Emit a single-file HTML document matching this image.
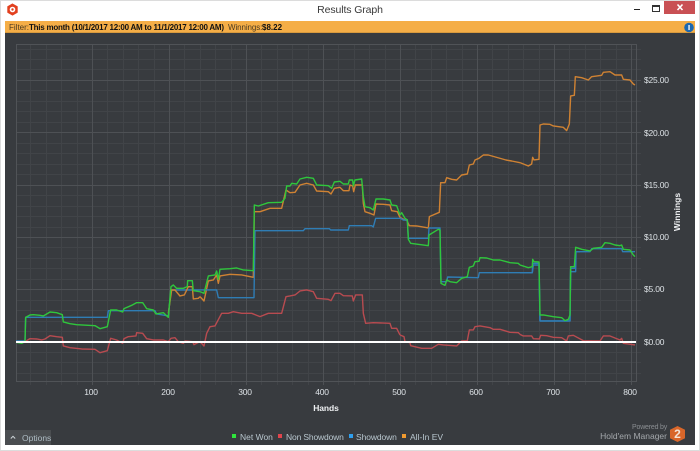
<!DOCTYPE html>
<html><head><meta charset="utf-8"><style>
html,body{margin:0;padding:0}
body{width:700px;height:451px;position:relative;overflow:hidden;background:#fff;font-family:"Liberation Sans",sans-serif}
.a{position:absolute;white-space:nowrap}
.l{font-size:8.500px;letter-spacing:-.2px;color:#dde2e6;line-height:12px}
.x{font-size:8.500px;letter-spacing:-.2px;color:#dde2e6;line-height:12px;width:40px;text-align:center;top:386px}
.k{font-size:8.500px;color:#b8c6ce;line-height:12px;top:431px}
.s{width:4px;height:4px;top:434px}
polyline{fill:none;stroke-width:1.4;vector-effect:non-scaling-stroke;stroke-linejoin:round}
.o{stroke:#cf8233}.b{stroke:#2f7db5}.r{stroke:#b84b50}.g{stroke:#2fc63c}
</style></head><body>
<div class="a" style="left:0;top:0;width:700px;height:1px;background:#dcdcdc"></div>
<div class="a" style="left:0;top:450px;width:700px;height:1px;background:#dcdcdc"></div>
<div class="a" style="left:0;top:0;width:1px;height:451px;background:#dcdcdc"></div>
<div class="a" style="left:699px;top:0;width:1px;height:451px;background:#dcdcdc"></div>
<svg class="a" style="left:6px;top:3px" width="13" height="14" viewBox="0 0 13 14"><path d="M6.500 1 11.200 3.700 11.200 9.300 6.500 12 1.800 9.300 1.800 3.700Z" fill="#e2401f" stroke="#e2401f"/><circle cx="6.500" cy="6.500" r="2.800" fill="#fff"/><circle cx="6.500" cy="6.500" r="1.200" fill="#e2401f"/></svg>
<div class="a" style="left:250px;width:200px;top:3px;text-align:center;font-size:10.500px;line-height:15px;letter-spacing:-.1px;color:#3a3a3a">Results Graph</div>
<div class="a" style="left:634px;top:9px;width:6px;height:1px;background:#222"></div>
<div class="a" style="left:652px;top:5px;width:6px;height:4px;border:1px solid #333;border-top-width:2px"></div>
<div class="a" style="left:664px;top:1px;width:31px;height:13px;background:#c95054"></div>
<svg class="a" style="left:676px;top:3px" width="8" height="9" viewBox="0 0 8 9"><path d="M1.500 1.500 6.500 7M6.500 1.500 1.500 7" stroke="#fff" stroke-width="1.600"/></svg>

<div class="a" style="left:5px;top:21px;width:690px;height:12px;background:#f5ae47;border-bottom:1px solid #d89a3e;box-sizing:border-box"></div>
<div class="a" style="left:9px;top:22px;font-size:8px;line-height:11px;color:#4a3a20">Filter:</div>
<div class="a" style="left:29px;top:22px;font-size:8px;line-height:11px;color:#111;font-weight:bold;letter-spacing:-.24px">This month (10/1/2017 12:00 AM to 11/1/2017 12:00 AM)</div>
<div class="a" style="left:228px;top:22px;font-size:8px;line-height:11px;letter-spacing:-.1px;color:#4a3a20">Winnings:</div>
<div class="a" style="left:262px;top:22px;font-size:8px;line-height:11px;color:#111;font-weight:bold">$8.22</div>
<svg class="a" style="left:683px;top:22px" width="12" height="12"><circle cx="6" cy="5.500" r="4.800" fill="#1d68b0"/><rect x="5.300" y="3" width="1.500" height="5" fill="#e8eef4"/></svg>

<div class="a" style="left:5px;top:33px;width:690px;height:412px;background:#383b3f"></div>

<svg class="a" style="left:0;top:0" width="700" height="451">
<g stroke="#414448" stroke-width="1" shape-rendering="crispEdges">
<path d="M30.500 44V385M46.500 44V385M61.500 44V385M77.500 44V385M107.500 44V385M123.500 44V385M138.500 44V385M154.500 44V385M184.500 44V385M200.500 44V385M215.500 44V385M231.500 44V385M261.500 44V385M277.500 44V385M292.500 44V385M308.500 44V385M338.500 44V385M354.500 44V385M369.500 44V385M385.500 44V385M415.500 44V385M431.500 44V385M446.500 44V385M462.500 44V385M492.500 44V385M508.500 44V385M523.500 44V385M539.500 44V385M569.500 44V385M585.500 44V385M600.500 44V385M616.500 44V385"/>
<path d="M16 49.500H641M16 59.500H641M16 69.500H641M16 90.500H641M16 101.500H641M16 111.500H641M16 122.500H641M16 143.500H641M16 153.500H641M16 164.500H641M16 174.500H641M16 195.500H641M16 206.500H641M16 216.500H641M16 227.500H641M16 247.500H641M16 258.500H641M16 268.500H641M16 279.500H641M16 300.500H641M16 310.500H641M16 321.500H641M16 331.500H641M16 352.500H641M16 362.500H641M16 373.500H641"/>
</g>
<g stroke="#4e5155" stroke-width="1" shape-rendering="crispEdges">
<path d="M92.500 44V385M169.500 44V385M246.500 44V385M323.500 44V385M400.500 44V385M477.500 44V385M554.500 44V385M631.500 44V385"/>
<path d="M16 80.500H641M16 132.500H641M16 185.500H641M16 237.500H641M16 289.500H641"/>
<rect x="16.500" y="44.500" width="620" height="337" fill="none" stroke="#505357"/>
</g>

<g transform="translate(0,230) scale(.3333)">
<polyline class="b" points="48,333 75,333 77,262 322,262 325,242 465,242 470,252 505,258 513,180 577,180 600,180"/>
<polyline class="r" points="48,337 75,335 90,326 110,327 125,330 135,327 150,317 170,320 187,322 190,348 210,353 245,357 285,358 300,368 322,362 332,325 350,330 368,340 372,326 385,320 408,318 410,308 428,310 440,326 460,330 490,330 505,335 513,325 525,323 535,335 550,340 555,333 578,335 582,344 600,335"/>
<polyline class="o" points="505,250 515,180 525,180 540,198 553,195 565,170 577,170 580,207 595,205 600,200"/>
<polyline class="g" points="48,337 65,340 75,335 77,262 90,255 100,254 120,256 130,258 150,246 170,248 187,254 190,276 210,281 230,284 285,287 300,296 322,290 332,240 350,240 368,246 372,236 395,226 410,218 428,218 440,236 460,240 468,252 490,248 505,262 513,170 520,165 530,175 550,175 562,170 563,152 577,152 580,182 600,185"/>
</g>
<g transform="translate(200,160) scale(.3333)">
<polyline class="o" points="0,410 12,423 25,363 40,360 50,345 55,370 60,348 90,343 125,345 160,352 163,155 180,155 210,145 245,145 258,90 270,98 285,97 300,75 320,70 340,75 350,93 385,95 393,102 403,85 420,82 430,92 447,92 450,75 458,78 461,95 466,75 487,75 490,130 495,155 510,160 522,165 528,132 550,133 570,135 575,152 592,155 600,172"/>
<polyline class="b" points="0,390 50,390 55,413 162,413 165,212 310,212 315,206 388,206 392,210 445,210 448,197 515,197 520,201 527,175 600,175"/>
<polyline class="r" points="0,545 12,558 20,520 30,500 45,498 65,460 85,460 100,455 125,460 155,460 180,470 205,460 245,460 258,410 270,408 285,405 300,393 320,390 340,395 350,415 385,418 393,422 405,400 420,400 430,407 457,408 460,423 467,405 487,405 490,460 497,490 520,488 570,490 575,505 590,505 600,525"/>
<polyline class="g" points="0,395 12,400 25,348 45,345 50,333 55,358 60,328 90,326 110,324 130,330 160,332 163,135 175,138 205,128 245,127 255,115 260,78 270,78 275,70 290,72 300,57 320,52 340,55 350,75 385,77 395,85 403,66 420,64 430,72 445,72 448,60 458,60 460,78 465,60 485,57 490,110 495,140 510,143 520,150 528,117 550,117 570,120 575,135 590,137 600,165"/>
</g>
<g transform="translate(380,160) scale(.3333)">
<polyline class="o" points="60,172 75,180 80,180 88,197 110,198 145,204 148,170 178,157 182,68 195,68 200,53 215,58 230,60 245,45 262,42 268,15 280,12 285,0 297,-5 310,-15 325,-15 378,0 395,3 420,8"/>
<polyline class="b" points="60,174 70,180 82,180 85,235 145,235 147,204 180,204 183,365 200,365 203,351 295,353 298,338 457,338 460,315 477,315 480,483 570,483 572,325 585,325 587,275 600,275"/>
<polyline class="r" points="60,525 72,530 75,545 90,548 92,557 125,565 155,565 175,553 190,555 230,558 245,543 262,542 268,510 280,510 285,500 300,498 330,503 340,508 360,508 390,517 415,518 420,523"/>
<polyline class="g" points="60,165 65,158 75,175 82,180 85,238 92,250 145,257 147,225 175,208 180,210 183,370 195,376 200,360 210,365 230,368 245,355 262,350 268,322 280,318 285,305 297,304 300,293 320,294 340,300 360,300 390,308 415,310 420,315"/>
</g>
<g transform="translate(520,200) scale(.3333)">
<polyline class="b" points="0,218 37,218 38,190 57,190 60,363 150,363 152,215 167,215 168,155 210,155 215,146 305,146 308,155 345,155"/>
<polyline class="r" points="0,403 10,408 35,408 40,416 58,417 62,406 80,407 100,412 125,413 140,423 145,408 160,406 190,422 240,423 250,408 270,408 300,420 305,415 310,430 345,435"/>
<polyline class="g" points="0,195 25,203 37,200 38,178 42,185 57,186 60,345 70,345 100,350 125,353 135,362 145,358 150,345 152,200 163,200 167,142 185,148 210,153 220,145 245,142 255,128 270,130 285,135 300,137 305,135 310,148 330,150 340,165 345,170"/>
</g>
<g transform="translate(520,60) scale(.3333)">
<polyline class="o" points="0,308 25,318 35,312 38,292 42,300 57,298 60,195 70,192 90,193 100,198 130,202 140,212 148,192 152,108 163,106 166,50 185,53 205,60 215,50 245,46 250,37 270,35 285,45 305,45 310,58 330,60 340,72 345,75"/>
</g>
<rect x="16" y="341" width="620" height="2" fill="#fff"/>
</svg>

<div class="a l" style="left:644px;top:74px">$25.00</div>
<div class="a l" style="left:644px;top:127px">$20.00</div>
<div class="a l" style="left:644px;top:179px">$15.00</div>
<div class="a l" style="left:644px;top:231px">$10.00</div>
<div class="a l" style="left:644px;top:283px">$5.00</div>
<div class="a l" style="left:644px;top:336px">$0.00</div>
<div class="a" style="left:647px;top:206px;width:60px;text-align:center;font-size:8.500px;line-height:12px;font-weight:bold;color:#eef0f2;transform:rotate(-90deg)">Winnings</div>

<div class="a x" style="left:71px">100</div>
<div class="a x" style="left:148px">200</div>
<div class="a x" style="left:225px">300</div>
<div class="a x" style="left:302px">400</div>
<div class="a x" style="left:379px">500</div>
<div class="a x" style="left:456px">600</div>
<div class="a x" style="left:533px">700</div>
<div class="a x" style="left:610px">800</div>
<div class="a" style="left:296px;width:60px;text-align:center;top:402px;font-size:8.500px;line-height:12px;font-weight:bold;letter-spacing:-.1px;color:#eef0f2">Hands</div>

<div class="a" style="left:5px;top:430px;width:46px;height:15px;background:#4a4d50"></div>
<svg class="a" style="left:10px;top:435px" width="6" height="5"><path d="M.8 3.500 3 1.300 5.200 3.500" fill="none" stroke="#cfd6da" stroke-width="1"/></svg>
<div class="a" style="left:22px;top:432px;font-size:8.500px;line-height:12px;color:#aebcc4">Options</div>

<div class="a s" style="left:232px;background:#2fe63c"></div>
<div class="a k" style="left:240px">Net Won</div>
<div class="a s" style="left:278px;background:#e0444c"></div>
<div class="a k" style="left:286px;letter-spacing:-.15px">Non Showdown</div>
<div class="a s" style="left:349px;background:#2f9fee"></div>
<div class="a k" style="left:356px;letter-spacing:-.1px">Showdown</div>
<div class="a s" style="left:402px;background:#f09a30"></div>
<div class="a k" style="left:410px">All-In EV</div>

<div class="a" style="right:33px;top:423px;font-size:7px;line-height:10px;letter-spacing:-.2px;color:#8a8e92">Powered by</div>
<div class="a" style="right:33px;top:430px;font-size:8.500px;line-height:12px;color:#a4a8ac">Hold'em Manager</div>
<svg class="a" style="left:669px;top:425px" width="17" height="18" viewBox="0 0 17 18"><path d="M8.500 1 16 4.800V13.200L8.500 17 1 13.200V4.800Z" fill="#d8662a"/></svg>
<div class="a" style="left:669px;top:427px;width:17px;text-align:center;font-size:12px;line-height:14px;font-weight:bold;color:#f4e4d8">2</div>
</body></html>
